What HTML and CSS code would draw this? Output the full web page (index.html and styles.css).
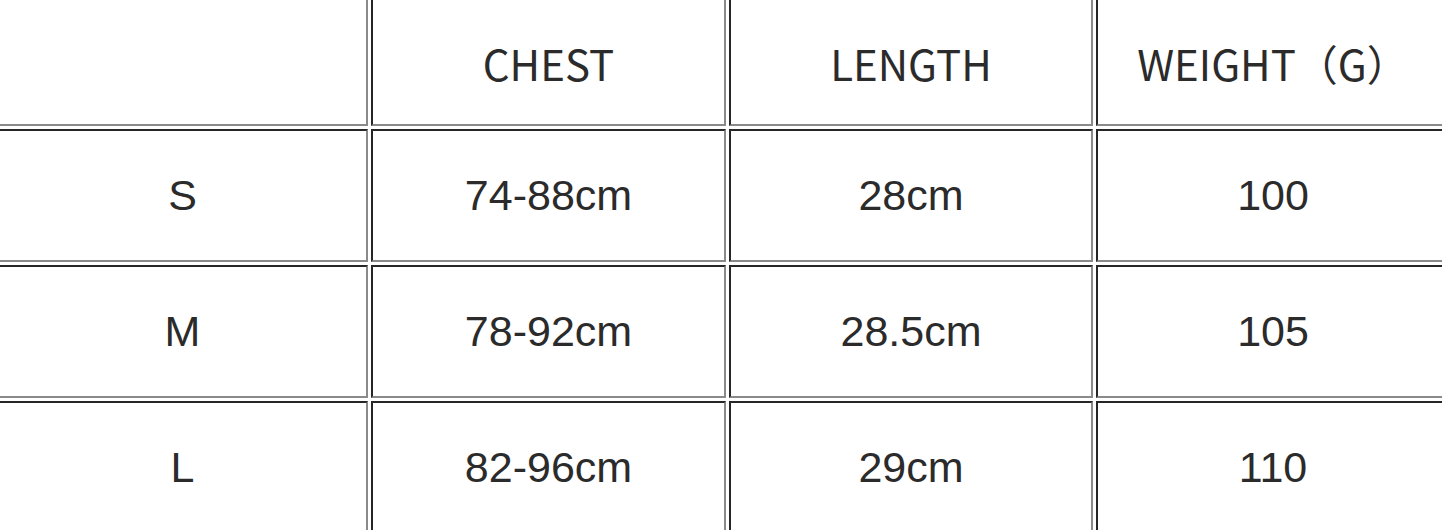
FILE: index.html
```html
<!DOCTYPE html>
<html>
<head>
<meta charset="utf-8">
<link rel="stylesheet" href="styles.css">
</head>
<body>
<div class="frame">
  <table class="size-table">
    <colgroup>
      <col class="c1"><col class="c2"><col class="c3"><col class="c4">
    </colgroup>
    <thead>
      <tr>
        <th></th>
        <th>CHEST</th>
        <th>LENGTH</th>
        <th>WEIGHT（G）</th>
      </tr>
    </thead>
    <tbody>
      <tr><td>S</td><td>74-88cm</td><td>28cm</td><td>100</td></tr>
      <tr><td>M</td><td>78-92cm</td><td>28.5cm</td><td>105</td></tr>
      <tr><td>L</td><td>82-96cm</td><td>29cm</td><td>110</td></tr>
    </tbody>
  </table>
</div>
</body>
</html>
```

FILE: styles.css
```css
html, body {
  margin: 0;
  padding: 0;
  background: #ffffff;
}

.frame {
  width: 1442px;
  height: 530px;
  overflow: hidden;
}

.size-table {
  margin: -10px 0 0 -6px;
  border-collapse: separate;
  border-spacing: 3px;
  table-layout: fixed;
  width: 1459px;
}

.c1 { width: 371px; }
.c2 { width: 355px; }
.c3 { width: 364px; }
.c4 { width: 354px; }

.size-table th,
.size-table td {
  height: 129px;
  padding: 0;
  border-style: solid;
  border-width: 2px;
  border-top-color: #262626;
  border-left-color: #262626;
  border-right-color: #8a8a8a;
  border-bottom-color: #8a8a8a;
  text-align: center;
  vertical-align: middle;
  color: #2b2b2b;
  white-space: nowrap;
}

.size-table th {
  font-family: "Noto Sans CJK SC", "Noto Sans", sans-serif;
  font-weight: normal;
  font-size: 42px;
  line-height: 1;
  padding-top: 6px;
  height: 123px;
}

.size-table td {
  font-family: "Liberation Sans", Arial, sans-serif;
  font-size: 43px;
  line-height: 1;
}
```
